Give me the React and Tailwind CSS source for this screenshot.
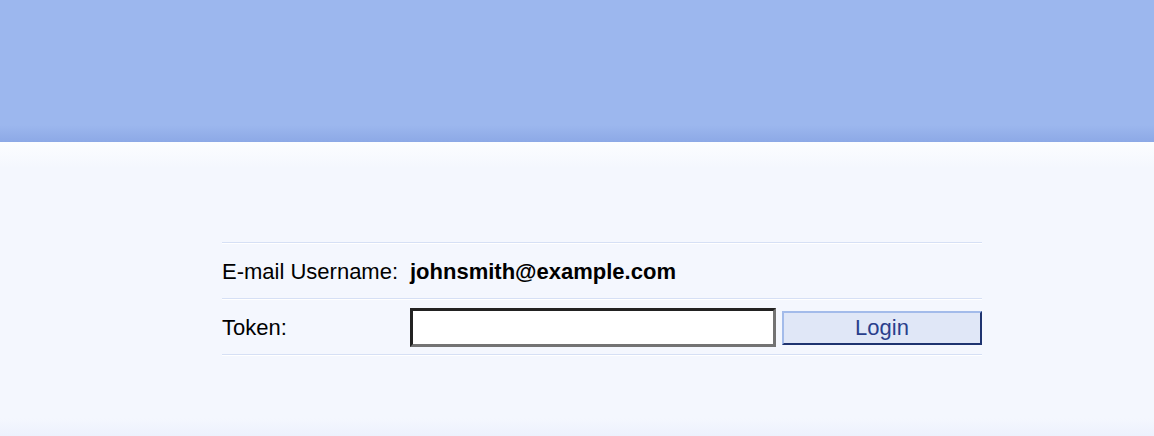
import React from "react";

const LoginPage = () => {
    return (
        <div className="flex flex-col h-[436px] font-['Liberation_Sans',Arial,sans-serif] text-black">
            <div className="h-[142px] shrink-0 bg-[linear-gradient(to_bottom,#9cb7ee_0%,#9cb7ee_88%,#8eaae7_99%,#8ca8e6_100%)]" />
            <div className="flex-1 pt-[100px] pl-[222px] bg-[linear-gradient(to_bottom,#fcfdff_0%,#f4f7fe_9%,#f4f7fe_94%,#edf1fd_100%)]">
                <div className="w-[760px]">
                    <div className="border-t border-[#d6e0f5]">
                        <div className="border-t border-white h-[55px] flex items-center">
                            <div className="w-[188px] text-[22px]">E-mail Username:</div>
                            <div className="text-[22px] font-bold">johnsmith@example.com</div>
                        </div>
                    </div>
                    <div className="border-t border-[#d6e0f5]">
                        <div className="border-t border-white h-[55px] flex items-start">
                            <div className="w-[188px] text-[22px] self-center">Token:</div>
                            <input
                                type="password"
                                className="mt-[8px] w-[366px] h-[39px] bg-white outline-none border-[3px] border-t-[#222] border-l-[#222] border-b-[#737373] border-r-[#737373]"
                            />
                            <button className="mt-[11px] ml-[6px] w-[200px] h-[34px] bg-[#e0e7f7] text-[#2a3f8c] text-[22px] leading-none border-2 border-t-[#a3bbea] border-l-[#a3bbea] border-b-[#1f3470] border-r-[#1f3470]">
                                Login
                            </button>
                        </div>
                    </div>
                    <div className="border-t border-[#d6e0f5]">
                        <div className="border-t border-white" />
                    </div>
                </div>
            </div>
        </div>
    );
};

export default function App() {
    return <LoginPage />;
}
